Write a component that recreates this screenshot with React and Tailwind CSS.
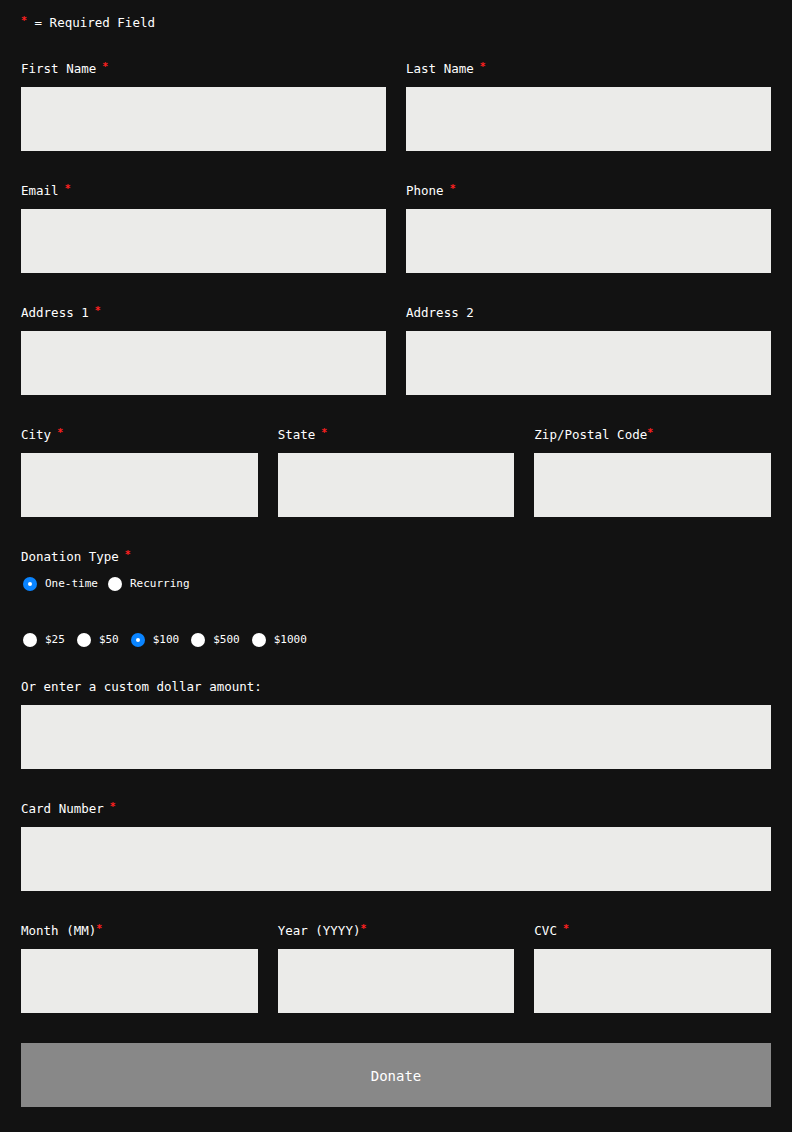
const font = { fontFamily: '"DejaVu Sans Mono", "Liberation Mono", monospace' };

function Req({ space = true }) {
  return (
    <span className="text-[#ff2020] text-[10px] font-bold align-top relative top-[-2px]">
      {space ? " *" : "*"}
    </span>
  );
}

function Field({ label, req = true, space = true, className = "" }) {
  return (
    <div className={className}>
      <label className="block h-[18px] leading-[20px] text-[12.5px] text-white mb-[10px]">
        {label}
        {req && <Req space={space} />}
      </label>
      <input className="block w-full h-16 bg-[#ebebe9] outline-none px-3 text-black" />
    </div>
  );
}

function Radio({ label, checked }) {
  return (
    <label className="flex items-center gap-[8px] text-[11px] text-white leading-[18px]">
      {checked ? (
        <span className="w-[14px] h-[14px] rounded-full bg-[#0a84ff] flex items-center justify-center">
          <span className="w-[4px] h-[4px] rounded-full bg-white" />
        </span>
      ) : (
        <span className="w-[14px] h-[14px] rounded-full bg-white" />
      )}
      {label}
    </label>
  );
}

export default function App() {
  return (
    <div className="min-h-[1132px] bg-[#121212] px-[21px] pt-[14px] pb-[25px]" style={font}>
      <div className="h-[18px] leading-[18px] text-[12.5px] text-white">
        <span className="text-[#ff2020] text-[10px] font-bold align-top relative top-[-2px]">*</span> = Required Field
      </div>

      <div className="mt-[27px] grid grid-cols-2 gap-x-5 gap-y-[30px]">
        <Field label="First Name" />
        <Field label="Last Name" />
        <Field label="Email" />
        <Field label="Phone" />
        <Field label="Address 1" />
        <Field label="Address 2" req={false} />
      </div>

      <div className="mt-[30px] grid grid-cols-3 gap-x-5">
        <Field label="City" />
        <Field label="State" />
        <Field label="Zip/Postal Code" space={false} />
      </div>

      <div className="mt-[30px]">
        <div className="h-[18px] leading-[20px] text-[12.5px] text-white">
          Donation Type<Req />
        </div>
        <div className="mt-[10px] flex items-center gap-[10px] pl-[2px]">
          <Radio label="One-time" checked />
          <Radio label="Recurring" />
        </div>
        <div className="mt-[38px] flex items-center gap-[12px] pl-[2px]">
          <Radio label="$25" />
          <Radio label="$50" />
          <Radio label="$100" checked />
          <Radio label="$500" />
          <Radio label="$1000" />
        </div>
      </div>

      <Field className="mt-[28px]" label="Or enter a custom dollar amount:" req={false} />
      <Field className="mt-[30px]" label="Card Number" />

      <div className="mt-[30px] grid grid-cols-3 gap-x-5">
        <Field label="Month (MM)" space={false} />
        <Field label="Year (YYYY)" space={false} />
        <Field label="CVC" />
      </div>

      <button className="mt-[30px] w-full h-16 bg-[#888888] text-white text-[14px] leading-[66px]">
        Donate
      </button>
    </div>
  );
}
